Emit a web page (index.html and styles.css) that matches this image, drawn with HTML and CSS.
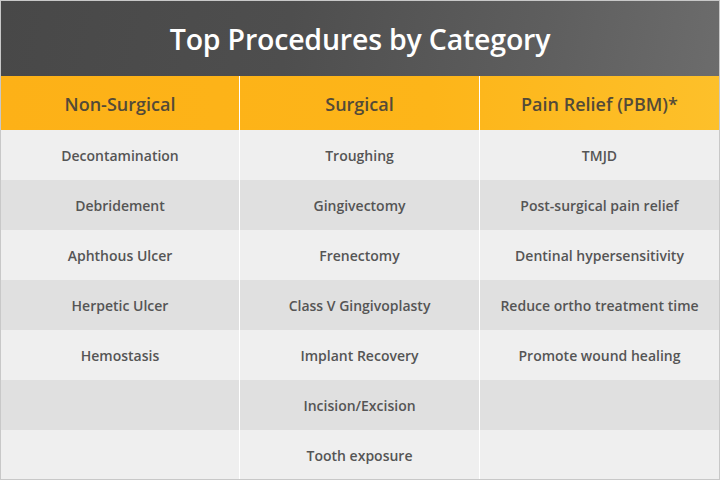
FILE: index.html
```html
<!DOCTYPE html>
<html>
<head>
<meta charset="utf-8">
<link rel="stylesheet" href="styles.css">
</head>
<body>
<div class="chart">
  <div class="title">Top Procedures by Category</div>
  <div class="table">
    <div class="row head">
      <div class="cell">Non-Surgical</div>
      <div class="cell">Surgical</div>
      <div class="cell">Pain Relief (PBM)*</div>
    </div>
    <div class="row light">
      <div class="cell">Decontamination</div>
      <div class="cell">Troughing</div>
      <div class="cell">TMJD</div>
    </div>
    <div class="row dark">
      <div class="cell">Debridement</div>
      <div class="cell">Gingivectomy</div>
      <div class="cell">Post-surgical pain relief</div>
    </div>
    <div class="row light">
      <div class="cell">Aphthous Ulcer</div>
      <div class="cell">Frenectomy</div>
      <div class="cell">Dentinal hypersensitivity</div>
    </div>
    <div class="row dark">
      <div class="cell">Herpetic Ulcer</div>
      <div class="cell">Class V Gingivoplasty</div>
      <div class="cell">Reduce ortho treatment time</div>
    </div>
    <div class="row light">
      <div class="cell">Hemostasis</div>
      <div class="cell">Implant Recovery</div>
      <div class="cell">Promote wound healing</div>
    </div>
    <div class="row dark">
      <div class="cell"></div>
      <div class="cell">Incision/Excision</div>
      <div class="cell"></div>
    </div>
    <div class="row light">
      <div class="cell"></div>
      <div class="cell">Tooth exposure</div>
      <div class="cell"></div>
    </div>
  </div>
</div>
</body>
</html>
```
FILE: styles.css
```css
html, body {
  margin: 0;
  padding: 0;
  width: 720px;
  height: 480px;
  overflow: hidden;
  background: #ffffff;
}
.chart {
  width: 720px;
  height: 480px;
  box-sizing: border-box;
  border: 1px solid #c8c8c8;
  font-family: "Open Sans", "Liberation Sans", sans-serif;
  display: flex;
  flex-direction: column;
}
.title {
  flex: none;
  height: 75px;
  display: flex;
  align-items: center;
  justify-content: center;
  color: #ffffff;
  font-size: 28.5px;
  font-weight: 600;
  letter-spacing: -0.2px;
  background: linear-gradient(100deg, #484848 0%, #4e4e4e 40%, #5e5e5e 75%, #6c6c6c 100%);
}
.table {
  flex: 1;
  display: flex;
  flex-direction: column;
  overflow: hidden;
}
.row {
  flex: none;
  display: grid;
  grid-template-columns: 239px 240px 1fr;
  height: 50px;
}
.row.head {
  height: 54px;
  background: linear-gradient(90deg, #fdb117 0%, #fdb519 60%, #fdc02a 100%);
}
.row.light { background: #efefef; }
.row.dark { background: #e0e0e0; }
.cell {
  display: flex;
  align-items: center;
  justify-content: center;
  border-right: 1px solid #ffffff;
  color: #555555;
  font-size: 14px;
  font-weight: 600;
}
.row.head .cell {
  color: #534a38;
  font-size: 18px;
  padding-top: 1px;
}
.cell:last-child { border-right: none; }
```
